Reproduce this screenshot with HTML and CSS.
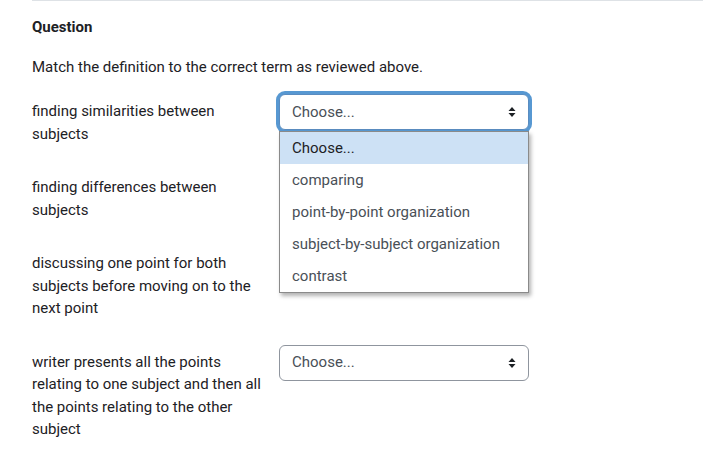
FILE: index.html
```html
<!DOCTYPE html>
<html>
<head>
<meta charset="utf-8">
<link rel="stylesheet" href="styles.css">
</head>
<body>
<div class="que">
  <h3 class="qhead">Question</h3>
  <p class="qtext">Match the definition to the correct term as reviewed above.</p>
  <div class="rows">
    <div class="row">
      <div class="label">finding similarities between subjects</div>
      <div class="control">
        <div class="select focused">
          <span>Choose...</span>
          <svg class="arrow" width="10" height="12" viewBox="0 0 10 12"><path d="M1.5 5 L5 1 L8.5 5 Z M1.5 7 L5 11 L8.5 7 Z" fill="#1d2125"/></svg>
        </div>
        <ul class="menu">
          <li class="opt active">Choose...</li>
          <li class="opt">comparing</li>
          <li class="opt">point-by-point organization</li>
          <li class="opt">subject-by-subject organization</li>
          <li class="opt">contrast</li>
        </ul>
      </div>
    </div>
    <div class="row">
      <div class="label">finding differences between subjects</div>
      <div class="control"></div>
    </div>
    <div class="row">
      <div class="label">discussing one point for both subjects before moving on to the next point</div>
      <div class="control"></div>
    </div>
    <div class="row">
      <div class="label">writer presents all the points relating to one subject and then all the points relating to the other subject</div>
      <div class="control">
        <div class="select">
          <span>Choose...</span>
          <svg class="arrow" width="10" height="12" viewBox="0 0 10 12"><path d="M1.5 5 L5 1 L8.5 5 Z M1.5 7 L5 11 L8.5 7 Z" fill="#1d2125"/></svg>
        </div>
      </div>
    </div>
  </div>
</div>
</body>
</html>
```
FILE: styles.css
```css
html, body {
  margin: 0;
  padding: 0;
  background: #fff;
}
body {
  font-family: Roboto, "Liberation Sans", sans-serif;
  font-size: 15px;
  line-height: 22.5px;
  color: #1d2125;
}
.que {
  margin-left: 32px;
  border-top: 1px solid #dee2e6;
  padding-top: 15px;
}
.qhead {
  margin: 0;
  font-size: 15px;
  font-weight: 700;
  line-height: 22.5px;
}
.qtext {
  margin: 17.5px 0 0 0;
}
.rows {
  margin-top: 15.5px;
}
.row {
  display: flex;
  align-items: flex-start;
  margin-bottom: 25px;
}
.label {
  width: 237px;
  padding-right: 10px;
  padding-top: 6px;
}
.control {
  position: relative;
  width: 250px;
}
.select {
  box-sizing: border-box;
  width: 250px;
  height: 36px;
  border: 1px solid #8f959e;
  border-radius: 6px;
  padding: 0 12px;
  display: flex;
  align-items: center;
  justify-content: space-between;
  color: #495057;
  background: #fff;
}
.select.focused {
  border-color: #5a8cc0;
  box-shadow: 0 0 0 3px rgba(15, 108, 191, 0.7);
}
.arrow {
  margin-right: -1px;
}
.menu {
  position: absolute;
  top: 37px;
  left: 0;
  box-sizing: border-box;
  width: 250px;
  margin: 0;
  padding: 0;
  list-style: none;
  background: #fff;
  border: 1px solid #8a8a8a;
  box-shadow: 2px 3px 4px rgba(0, 0, 0, 0.3);
  z-index: 5;
}
.opt {
  height: 32px;
  line-height: 32px;
  padding-left: 12px;
  color: #495057;
}
.opt.active {
  background: #cde1f5;
  color: #1d2125;
}
```
